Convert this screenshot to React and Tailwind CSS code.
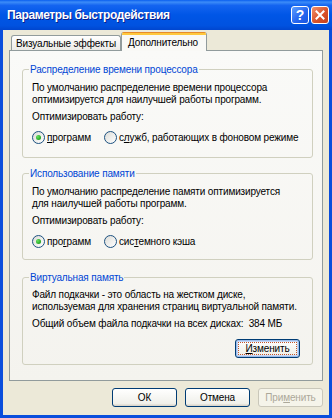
import React from "react";

const F = "font-['Liberation_Sans',Arial,sans-serif]";

function Radio({ checked }) {
  return (
    <span className="w-[13px] h-[13px] rounded-full border border-[#1C5180] bg-[linear-gradient(135deg,#DCDCD7,#FFFFFF)] flex items-center justify-center shrink-0">
      {checked && (
        <span className="w-[5px] h-[5px] rounded-full bg-[radial-gradient(circle_at_35%_35%,#63E35E,#21A121_75%)]" />
      )}
    </span>
  );
}

function Option({ checked, children, className = "" }) {
  return (
    <div className={`flex items-center ${className}`}>
      <Radio checked={checked} />
      <span className="ml-[2px] leading-[13px] whitespace-nowrap">{children}</span>
    </div>
  );
}

function Btn({ children, kind }) {
  if (kind === "default") {
    return (
      <button className="w-[65px] h-[19px] p-[2px] rounded-[3px] border border-[#003C74] bg-[linear-gradient(#FFFFFF,#F0F0EA_85%,#D6D0C5)] shadow-[inset_0_0_0_1px_#9DBCEB,inset_0_0_0_2px_#C8DAF6] flex">
        <span className="flex-1 border border-dotted border-[#C2552B] flex items-center justify-center leading-[11px]">
          {children}
        </span>
      </button>
    );
  }
  if (kind === "disabled") {
    return (
      <button className="w-[65px] h-[19px] rounded-[3px] border border-[#C9C7BA] bg-[#F5F4EA] text-[#ACA899] flex items-center justify-center leading-[11px]">
        {children}
      </button>
    );
  }
  return (
    <button className="w-[65px] h-[19px] rounded-[3px] border border-[#003C74] bg-[linear-gradient(#FFFFFF,#F0F0EA_85%,#D6D0C5)] flex items-center justify-center leading-[11px]">
      {children}
    </button>
  );
}

export default function App() {
  return (
    <div className={`w-[332px] h-[418px] bg-[#0A4EDC] flex flex-col ${F} text-[10px] tracking-[-0.15px] text-black overflow-hidden`}>
      {/* Title bar */}
      <div className="h-[30px] shrink-0 flex items-center pl-[7px] pr-[3px] bg-[linear-gradient(180deg,#0A5FEF_0%,#3C8CF8_7%,#1464F0_18%,#0056E6_50%,#0052E0_85%,#0046CF_100%)]">
        <span className="flex-1 text-white font-bold text-[12px] tracking-[-0.4px] leading-[15px] [text-shadow:1px_1px_0_#0A1E8A]">
          Параметры быстродействия
        </span>
        <div className="flex gap-[2px]">
          <div className="w-[18px] h-[18px] rounded-[3px] border border-white bg-[linear-gradient(135deg,#5FA0FF,#2767F0_55%,#1A56E0)] flex items-center justify-center text-white font-bold text-[14px] leading-[14px]">
            ?
          </div>
          <div className="w-[18px] h-[18px] rounded-[3px] border border-white bg-[linear-gradient(135deg,#F0916E,#D9532B_55%,#C7401C)] flex items-center justify-center">
            <svg width="10" height="10" viewBox="0 0 10 10">
              <path d="M1.5 1.5L8.5 8.5M8.5 1.5L1.5 8.5" stroke="white" strokeWidth="2" strokeLinecap="square" />
            </svg>
          </div>
        </div>
      </div>

      {/* Body */}
      <div className="flex-1 mx-[3px] mb-[3px] bg-[#ECE9D8] flex flex-col">
        {/* Tabs */}
        <div className="flex items-end pl-[8px] pt-[2px] h-[21px] -mb-[1px] relative z-10">
          <div className="h-[15px] mb-[1px] w-[110px] border border-b-0 border-[#919B9C] rounded-t-[3px] bg-[linear-gradient(#FFFFFF,#ECEBE6)] flex items-center pl-[4px] leading-[13px] whitespace-nowrap">
            Визуальные эффекты
          </div>
          <div className="h-[19px] w-[86px] border-x border-[#919B9C] rounded-t-[3px] bg-[#F9F9F6] flex flex-col overflow-hidden">
            <div className="h-[3px] shrink-0 bg-[#FFC83C] border-t border-[#E68B2C]" />
            <div className="flex-1 flex items-center pl-[6px] pb-[2px] leading-[13px] whitespace-nowrap">Дополнительно</div>
          </div>
        </div>

        {/* Panel */}
        <div className="mx-[6px] h-[331px] border border-[#919B9C] bg-[linear-gradient(#FAFAF8,#F4F3EE)] pt-[12px] pl-[12px] pr-[9px]">
          <fieldset className="border border-[#D0D0BF] rounded-[3px] pl-[9px] pr-[4px] pt-[6px] pb-[13px]">
            <legend className="-ml-[3px] px-[1px] text-[#0046D5] leading-[13px]">
              Распределение времени процессора
            </legend>
            <p className="leading-[12px] whitespace-nowrap">
              По умолчанию распределение времени процессора
              <br />
              оптимизируется для наилучшей работы программ.
            </p>
            <p className="leading-[12px] mt-[5px]">Оптимизировать работу:</p>
            <div className="flex mt-[8px]">
              <Option checked className="w-[72px]">
                <span className="underline">п</span>рограмм
              </Option>
              <Option>
                с<span className="underline">л</span>ужб, работающих в фоновом режиме
              </Option>
            </div>
          </fieldset>

          <fieldset className="mt-[9px] border border-[#D0D0BF] rounded-[3px] pl-[9px] pr-[4px] pt-[6px] pb-[11px]">
            <legend className="-ml-[3px] px-[1px] text-[#0046D5] leading-[13px]">
              Использование памяти
            </legend>
            <p className="leading-[12px] whitespace-nowrap">
              По умолчанию распределение памяти оптимизируется
              <br />
              для наилучшей работы программ.
            </p>
            <p className="leading-[12px] mt-[5px]">Оптимизировать работу:</p>
            <div className="flex mt-[8px]">
              <Option checked className="w-[72px]">
                про<span className="underline">г</span>рамм
              </Option>
              <Option>
                сис<span className="underline">т</span>емного кэша
              </Option>
            </div>
          </fieldset>

          <fieldset className="mt-[11px] border border-[#D0D0BF] rounded-[3px] pl-[9px] pr-[12px] pt-[5px] pb-[6px]">
            <legend className="-ml-[3px] px-[1px] text-[#0046D5] leading-[13px]">
              Виртуальная память
            </legend>
            <p className="leading-[12px] whitespace-nowrap">
              Файл подкачки - это область на жестком диске,
              <br />
              используемая для хранения страниц виртуальной памяти.
            </p>
            <p className="leading-[12px] mt-[5px] whitespace-nowrap">Общий объем файла подкачки на всех дисках:&nbsp;&nbsp;384 МБ</p>
            <div className="flex justify-end mt-[9px]">
              <Btn kind="default">
                <span className="underline">И</span>зменить
              </Btn>
            </div>
          </fieldset>
        </div>

        {/* Buttons */}
        <div className="flex justify-end gap-[8px] mt-[7px] pr-[6px]">
          <Btn>ОК</Btn>
          <Btn>Отмена</Btn>
          <Btn kind="disabled">
            При<span className="underline">м</span>енить
          </Btn>
        </div>
      </div>
    </div>
  );
}
